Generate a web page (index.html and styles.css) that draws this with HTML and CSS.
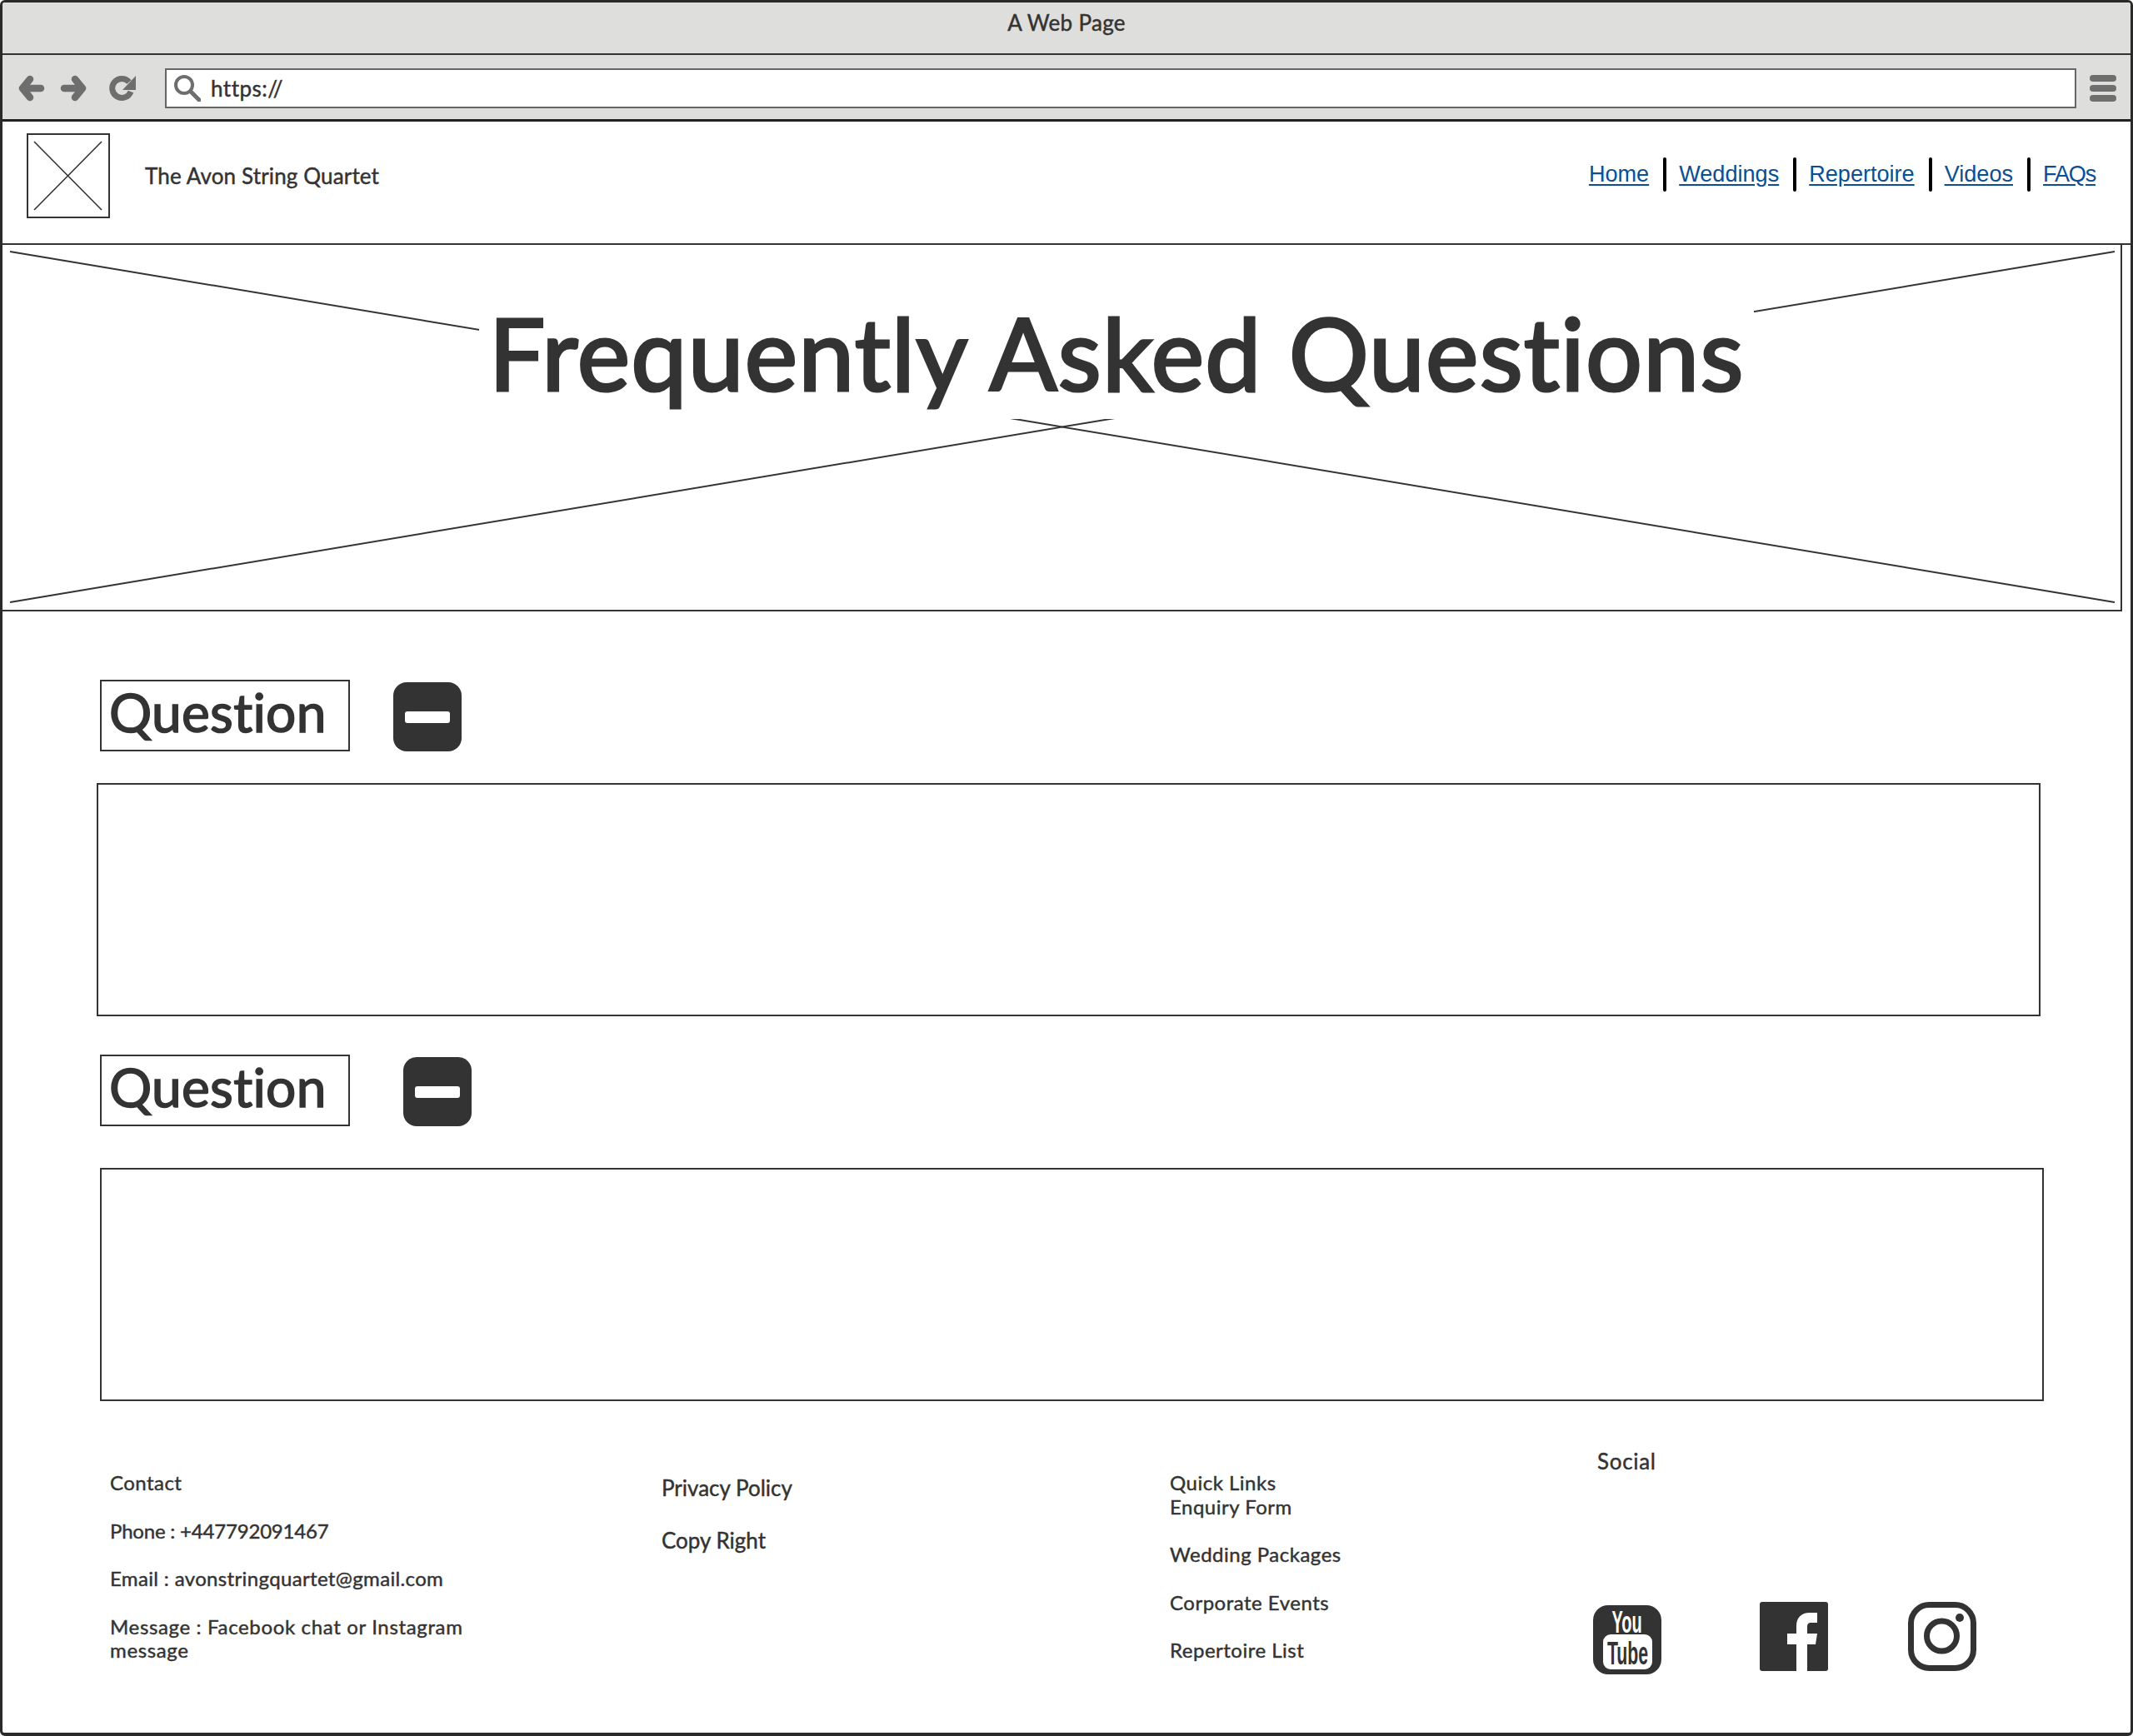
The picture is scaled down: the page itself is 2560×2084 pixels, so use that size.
FILE: index.html
```html
<!DOCTYPE html>
<html lang="en">
<head>
<meta charset="utf-8">
<title>A Web Page</title>
<link rel="stylesheet" href="styles.css">
</head>
<body>
<div class="window">
  <div class="titlebar">A Web Page</div>
  <div class="toolbar">
    <svg class="tool" viewBox="0 0 32 32"><path d="M14 5 5 16l9 11M5 16h22"/></svg>
    <svg class="tool" viewBox="0 0 32 32"><path d="M18 5l9 11-9 11M27 16H5"/></svg>
    <svg class="tool tool-reload" viewBox="0 0 32 32"><path class="arc" d="M24 8.500A11.500 11.500 0 1 0 26 20"/><path class="head" d="M32 1v17H16z"/></svg>
    <div class="address">
      <svg class="tool" viewBox="0 0 32 32"><circle class="lens" cx="12" cy="12" r="10"/><path class="handle" d="M20 20l10 10"/></svg>
      <span>https://</span>
    </div>
    <div class="menu"><i></i><i></i><i></i></div>
  </div>
  <header class="site-header">
    <div class="logo"><svg viewBox="0 0 96 98"><path d="M7 8l81 82M88 8 7 90"/></svg></div>
    <div class="brand">The Avon String Quartet</div>
    <nav class="nav">
      <a href="#">Home</a><span class="sep"></span>
      <a href="#">Weddings</a><span class="sep"></span>
      <a href="#">Repertoire</a><span class="sep"></span>
      <a href="#">Videos</a><span class="sep"></span>
      <a href="#" class="nav-faqs">FAQs</a>
    </nav>
  </header>
  <section class="hero">
    <svg class="hero-x" viewBox="0 0 2542 438" preserveAspectRatio="none"><path d="M9 8 2535 429M2535 8 9 429"/></svg>
    <h1 class="hero-title">Frequently Asked Questions</h1>
  </section>
  <main class="faq">
    <div class="q-row">
      <div class="q-label">Question</div>
      <div class="minus"><i></i></div>
    </div>
    <div class="answer answer-first"></div>
    <div class="q-row q-row-second">
      <div class="q-label">Question</div>
      <div class="minus"><i></i></div>
    </div>
    <div class="answer answer-second"></div>
  </main>
  <footer class="footer">
    <div class="col col-contact">
      <p>Contact</p>
      <p class="phone">Phone : +447792091467</p>
      <p class="email">Email : avonstringquartet@gmail.com</p>
      <p class="message">Message : Facebook chat or Instagram<br>message</p>
    </div>
    <div class="col col-legal">
      <p>Privacy Policy</p>
      <p>Copy Right</p>
    </div>
    <div class="col col-links">
      <p>Quick Links<br>Enquiry Form</p>
      <p>Wedding Packages</p>
      <p>Corporate Events</p>
      <p>Repertoire List</p>
    </div>
    <div class="col col-social">
      <div class="social-title">Social</div>
      <div class="social-icons">
        <svg class="ic ic-yt" viewBox="0 0 82 83">
          <rect width="82" height="83" rx="18" class="dark"/>
          <rect x="12" y="35" width="59" height="42" rx="9" class="light"/>
          <text transform="translate(40.500 33) scale(.54 1)" class="yt yt-you">You</text>
          <text transform="translate(41.500 71) scale(.56 1)" class="yt yt-tube">Tube</text>
        </svg>
        <svg class="ic ic-fb" viewBox="0 0 82 83">
          <rect width="82" height="83" rx="3" class="dark"/>
          <path class="light" d="M44 83V51H33V38H44V29C44 19 50 13 60 13H69V25H62C58 25 57 27 57 30V38H69L67 51H57V83Z"/>
        </svg>
        <svg class="ic ic-ig" viewBox="0 0 82 83">
          <rect x="3.500" y="3.500" width="75" height="76" rx="22" class="ring"/>
          <circle cx="40.500" cy="41" r="18" class="ring"/>
          <circle cx="62" cy="19" r="5" class="dark"/>
        </svg>
      </div>
    </div>
  </footer>
</div>
</body>
</html>
```
FILE: styles.css
```css
* { box-sizing: border-box; }
html, body { margin: 0; padding: 0; background: #fff; }
body {
  font-family: "Lato", "Noto Sans", sans-serif; color: #333;
  font-variant-ligatures: none; -webkit-text-stroke: 0.45px #333;
}
.window {
  width: 2560px; height: 2084px;
  border: 3px solid #2a2a2a; border-bottom-width: 4px; border-radius: 6px;
  overflow: hidden; display: flex; flex-direction: column;
}
.titlebar {
  height: 63px; flex: none; background: #dededc;
  border-bottom: 2px solid #333;
  display: flex; align-items: center; justify-content: center;
  font-size: 26px; letter-spacing: 0.3px; padding-bottom: 13px;
}
.toolbar {
  height: 80px; flex: none; background: #dededc;
  border-bottom: 3px solid #222;
  display: flex; align-items: center;
  padding: 3px 17px 0 19px;
}
.tool { width: 32px; height: 32px; flex: none; margin-right: 18px; }
.tool path { fill: none; stroke: #6e6e6e; stroke-width: 8.5; stroke-linecap: round; stroke-linejoin: round; }
.tool .lens { fill: none; stroke: #6e6e6e; stroke-width: 4; }
.tool .handle { stroke-width: 5; }
.tool-reload { margin: 0 35px 0 9px; }
.tool-reload .head { fill: #6e6e6e; stroke: none; }
.tool-reload .arc { stroke-linecap: butt; stroke-width: 7; }
.address {
  flex: 1; height: 48px; background: #fff; border: 2px solid #666;
  display: flex; align-items: center; padding-left: 9px;
  font-size: 26px; letter-spacing: 0.5px;
}
.address .tool { margin-right: 12px; }
.menu { width: 32px; margin-left: 16px; flex: none; display: flex; flex-direction: column; gap: 4px; }
.menu i { display: block; height: 8px; border-radius: 4px; background: #6e6e6e; }
.site-header {
  height: 148px; flex: none; border-bottom: 2px solid #333;
  display: flex; align-items: flex-start; padding: 14px 42px 0 29px;
}
.logo { width: 100px; height: 102px; border: 2px solid #333; flex: none; }
.logo svg { display: block; width: 100%; height: 100%; }
.logo path { fill: none; stroke: #333; stroke-width: 1.6; }
.brand { margin-left: 42px; height: 102px; display: flex; align-items: center; font-size: 26px; letter-spacing: 0.15px; }
.nav {
  margin-left: auto; height: 102px; display: flex; align-items: center; gap: 15px; padding-bottom: 4px;
  font-family: "Liberation Sans", Arial, sans-serif; font-size: 27.1px; -webkit-text-stroke: 0;
}
.nav a { color: #0b4f91; text-decoration: underline; text-underline-offset: 3px; }
.nav .nav-faqs { letter-spacing: -1.2px; }
.sep { width: 4px; height: 41px; background: #000; border-radius: 2px; margin-left: 2px; }
.hero {
  position: relative; width: 2544px; height: 440px; flex: none;
  border-right: 2px solid #333; border-bottom: 2px solid #333;
  padding: 52px 0 0 572px;
}
.hero-x { position: absolute; left: 0; top: 0; width: 100%; height: 100%; }
.hero-x path { fill: none; stroke: #333; stroke-width: 2; }
.hero-title {
  position: relative; margin: 0; width: 1530px; height: 157px; background: #fff;
  font-size: 120px; font-weight: 400; line-height: 154px; text-align: center;
  color: #333; white-space: nowrap; letter-spacing: 1.2px;
  -webkit-text-stroke: 3.2px #333;
}
.faq { flex: none; padding: 82px 0 0 117px; }
.q-row { display: flex; align-items: flex-end; gap: 52px; }
.q-row-second { margin-top: 46px; gap: 64px; }
.q-label {
  width: 300px; height: 86px; border: 2px solid #333;
  font-size: 64px; line-height: 74px; padding-left: 9px; letter-spacing: 0.3px;
  -webkit-text-stroke: 1.6px #333;
}
.minus {
  width: 82px; height: 83px; background: #333; border-radius: 16px;
  display: flex; align-items: center; justify-content: center;
}
.minus i { display: block; width: 54px; height: 14px; background: #fff; border-radius: 3px; }
.answer { width: 2333px; height: 280px; border: 2px solid #333; }
.answer-first { margin: 38px 0 0 -4px; }
.answer-second { margin-top: 50px; }
.footer {
  flex: 1; display: grid; grid-template-columns: 661px 610px 513px 1fr;
  padding-left: 130px; font-size: 24px; line-height: 28.5px;
}
.col p { margin: 0 0 29px; }
.col-contact { padding-top: 84px; margin-left: -1px; letter-spacing: 0.45px; }
.col-contact .phone { letter-spacing: -0.2px; }
.col-contact .email { letter-spacing: 0.35px; }
.col-contact .message { letter-spacing: 0.65px; }
.col-legal { padding-top: 90px; font-size: 26px; }
.col-legal p { margin-bottom: 34px; }
.col-links { padding-top: 84px; letter-spacing: 0.5px; }
.col-social { padding-top: 58px; font-size: 26px; letter-spacing: 0.7px; }
.social-icons { margin: 154px 0 0 -5px; display: flex; align-items: flex-start; -webkit-text-stroke: 0; }
.ic { width: 82px; height: 83px; flex: none; display: block; }
.ic-yt { margin-top: 4px; }
.ic-fb { margin-left: 118px; }
.ic-ig { margin-left: 96px; }
.dark { fill: #333; }
.light { fill: #fff; }
.ring { fill: none; stroke: #333; stroke-width: 7; }
.yt { font-family: "Liberation Sans", Arial, sans-serif; font-weight: 700; text-anchor: middle; letter-spacing: 0; }
.yt-you { font-size: 37px; fill: #fff; }
.yt-tube { font-size: 38px; fill: #333; }
```
